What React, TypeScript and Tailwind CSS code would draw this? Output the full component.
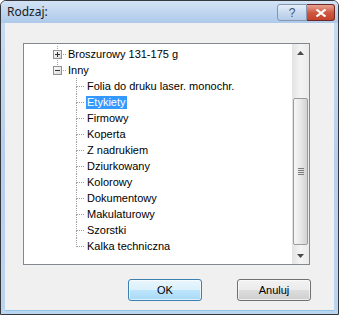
import React from 'react';

type Node = { label: string; level: 0 | 1; expander?: 'plus' | 'minus'; last?: boolean; selected?: boolean };

const NODES: Node[] = [
  { label: 'Broszurowy 131-175 g', level: 0, expander: 'plus' },
  { label: 'Inny', level: 0, expander: 'minus', last: true },
  { label: 'Folia do druku laser. monochr.', level: 1 },
  { label: 'Etykiety', level: 1, selected: true },
  { label: 'Firmowy', level: 1 },
  { label: 'Koperta', level: 1 },
  { label: 'Z nadrukiem', level: 1 },
  { label: 'Dziurkowany', level: 1 },
  { label: 'Kolorowy', level: 1 },
  { label: 'Dokumentowy', level: 1 },
  { label: 'Makulaturowy', level: 1 },
  { label: 'Szorstki', level: 1 },
  { label: 'Kalka techniczna', level: 1, last: true },
];

const DOT = { stroke: '#a0a0a0', strokeWidth: 1, strokeDasharray: '1 1', shapeRendering: 'crispEdges' as const };

// one 19x16 cell of the tree connector drawing
const Connector: React.FC<{ expander?: 'plus' | 'minus'; last?: boolean }> = ({ expander, last }) => (
  <svg width="19" height="16" className="shrink-0">
    <line x1="9.5" y1="0" x2="9.5" y2={expander ? 4 : 9} {...DOT} />
    {!last && <line x1="9.5" y1={expander ? 14 : 9} x2="9.5" y2="16" {...DOT} />}
    <line x1={expander ? 15 : 10} y1="8.5" x2="18" y2="8.5" {...DOT} />
    {expander && (
      <>
        <defs>
          <linearGradient id={`exp-${expander}`} x1="0" y1="0" x2="1" y2="1">
            <stop offset="0" stopColor="#ffffff" />
            <stop offset="1" stopColor="#d8d8d8" />
          </linearGradient>
        </defs>
        <rect x="5.5" y="4.5" width="8" height="8" fill={`url(#exp-${expander})`} stroke="#919191" shapeRendering="crispEdges" />
        <line x1="7" y1="8.5" x2="12" y2="8.5" stroke="#333" shapeRendering="crispEdges" />
        {expander === 'plus' && <line x1="9.5" y1="6" x2="9.5" y2="11" stroke="#333" shapeRendering="crispEdges" />}
      </>
    )}
  </svg>
);

const TreeRow: React.FC<{ node: Node }> = ({ node }) => (
  <div className="flex h-[16px] items-center pl-[24px]">
    {node.level === 1 && <div className="w-[19px] shrink-0" />}
    <Connector expander={node.expander} last={node.last} />
    <span
      className={`px-[1px] h-[13px] leading-[13px] whitespace-nowrap ${
        node.selected ? 'bg-[#3399ff] text-white' : 'text-black'
      }`}
    >
      {node.label}
    </span>
  </div>
);

const Arrow: React.FC<{ up?: boolean }> = ({ up }) => (
  <svg width="7" height="4">
    <polygon points={up ? '3.5,0 7,4 0,4' : '0,0 7,0 3.5,4'} fill="#4a4a4a" />
  </svg>
);

const Scrollbar: React.FC = () => (
  <div className="flex w-[17px] shrink-0 flex-col bg-gradient-to-r from-[#e3e3e3] via-[#f4f4f4] to-[#ebebeb]">
    <div className="flex h-[17px] items-center justify-center">
      <Arrow up />
    </div>
    <div className="flex flex-1 flex-col">
      <div className="h-[37px]" />
      <div className="mx-[1px] flex h-[147px] items-center justify-center rounded-[2px] border border-[#9b9b9b] bg-gradient-to-r from-[#f6f6f6] via-[#e8e8e8] to-[#d2d2d2]">
        <div className="flex flex-col gap-[1px]">
          <div className="h-[1px] w-[6px] bg-[#7a7a7a]" />
          <div className="h-[1px] w-[6px] bg-[#7a7a7a]" />
          <div className="h-[1px] w-[6px] bg-[#7a7a7a]" />
          <div className="h-[1px] w-[6px] bg-[#7a7a7a]" />
        </div>
      </div>
    </div>
    <div className="flex h-[17px] items-center justify-center">
      <Arrow />
    </div>
  </div>
);

const App: React.FC = () => {
  return (
    <div
      className="flex h-[315px] w-[339px] flex-col overflow-hidden rounded-t-[6px] border border-[#34373c] bg-gradient-to-b from-[#c9dcf2] via-[#b7cfec] to-[#bcd5ef]"
      style={{ fontFamily: '"Liberation Sans", Arial, sans-serif' }}
    >
      {/* title bar */}
      <div className="flex h-[22px] shrink-0 items-start justify-between bg-gradient-to-b from-[#d3e3f5] via-[#c0d6ef] to-[#adc9ea]">
        <span className="pl-[6px] pt-[2px] text-[12px] leading-[18px] text-[#1b1b1b]" style={{ fontFamily: '"Noto Sans", "Open Sans", sans-serif' }}>
          Rodzaj:
        </span>
        <div className="flex pt-[3px] pr-[3px]">
          <div className="flex h-[17px] w-[30px] items-center justify-center rounded-l-[3px] border border-[#8397b0] bg-gradient-to-b from-[#e6effa] via-[#c9daef] to-[#b4cbe8] text-[12px] leading-none text-[#3f526b]">
            ?
          </div>
          <div className="flex h-[17px] w-[28px] items-center justify-center rounded-r-[3px] border border-l-0 border-[#6e2a22] bg-gradient-to-b from-[#e8a493] via-[#cf5a44] to-[#c2412b]">
            <svg width="12" height="8">
              <path d="M1.5 0.5 L10.5 7.5 M10.5 0.5 L1.5 7.5" stroke="#ffffff" strokeWidth="2.2" />
            </svg>
          </div>
        </div>
      </div>

      {/* client area */}
      <div className="mx-[4px] mb-[3px] flex flex-1 flex-col border-b border-[#8fc3e6] bg-[#f0f0f0] text-[11px]">
        <div className="ml-[18px] mt-[20px] flex h-[222px] w-[287px] border border-[#828790] bg-white">
          <div className="flex-1 overflow-hidden pt-[2px]">
            {NODES.map((n) => (
              <TreeRow key={n.label} node={n} />
            ))}
          </div>
          <Scrollbar />
        </div>

        <div className="mt-[14px] flex justify-end gap-[35px] pr-[23px]">
          <button className="h-[22px] w-[74px] rounded-[3px] border border-[#3c7fb1] bg-[linear-gradient(to_bottom,#eaf6fd_0%,#d9f0fc_50%,#bee6fd_50%,#a7d9f5_100%)] text-[11px] font-normal text-black shadow-[inset_0_0_0_1px_#ffffffa0]">
            OK
          </button>
          <button className="h-[22px] w-[74px] rounded-[3px] border border-[#707070] bg-[linear-gradient(to_bottom,#f2f2f2_0%,#ebebeb_50%,#dddddd_50%,#cfcfcf_100%)] text-[11px] font-normal text-black shadow-[inset_0_0_0_1px_#ffffffa0]">
            Anuluj
          </button>
        </div>
      </div>
    </div>
  );
};

export default App;
